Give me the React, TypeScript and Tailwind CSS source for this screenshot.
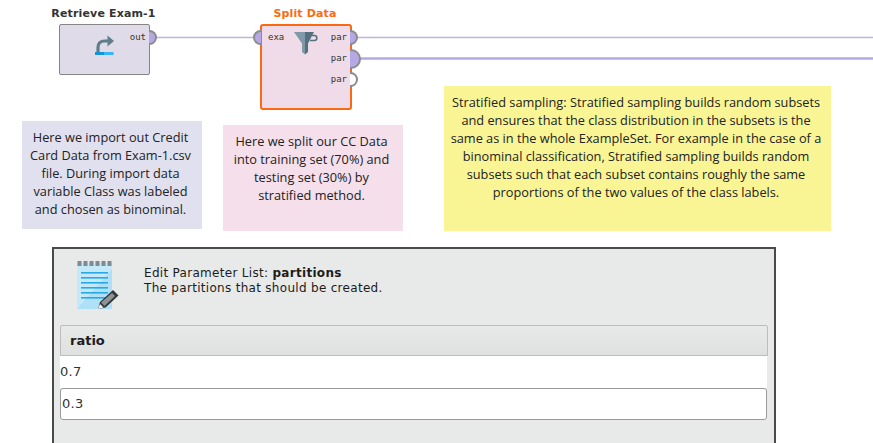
import type { ReactNode } from 'react'

const UI_FONT = "font-['DejaVu_Sans',sans-serif]"
const NOTE_FONT = "font-['Open_Sans',sans-serif]"
const PORT_FONT = "font-['DejaVu_Sans_Mono',monospace]"

// half-round port hanging off the side of an operator box
function Port({ side, className }: { side: 'in' | 'out'; className: string }): JSX.Element {
  const shape = side === 'in' ? 'rounded-l-full border-r-0' : 'rounded-r-full border-l-0'
  return <div className={`absolute border-2 border-[#8c8c8c] ${shape} ${className}`} />
}

function PortLabels({ names, className }: { names: string[]; className: string }): JSX.Element {
  return (
    <div className={`flex flex-col gap-[11px] text-[9px] leading-[10px] text-[#333] ${PORT_FONT} ${className}`}>
      {names.map((n, i) => (
        <span key={i}>{n}</span>
      ))}
    </div>
  )
}

// title above a box; the node itself sits freely on the process canvas
function Operator({
  title,
  position,
  titleColor,
  children
}: {
  title: string
  position: string
  titleColor: string
  children: ReactNode
}): JSX.Element {
  return (
    <div className={`absolute flex flex-col items-center ${position}`}>
      <div className={`mb-[3px] -translate-x-px whitespace-nowrap text-[11px] font-bold leading-[14px] tracking-[0.15px] ${titleColor}`}>
        {title}
      </div>
      {children}
    </div>
  )
}

function RetrieveIcon(): JSX.Element {
  return (
    <svg width="20" height="21" viewBox="0 0 20 21" className="ml-[35px] mt-[10px] shrink-0">
      <path d="M3 17.5V12.5C3 8.5 5.5 6 9.5 6H13.5" fill="none" stroke="#5f7d8c" strokeWidth="3.2" />
      <path d="M12.5 0.5L19 6L12.5 11.5Z" fill="#5f7d8c" />
      <rect x="0" y="17" width="9" height="3" fill="#1593d8" />
      <rect x="9" y="17" width="9.5" height="3" fill="#36b6f2" />
    </svg>
  )
}

function FilterIcon(): JSX.Element {
  return (
    <svg width="24" height="23" viewBox="0 0 24 23" className="ml-[10px] mt-[6px] shrink-0">
      <path d="M0 0H11V22.5L8 20V11.5Z" fill="#7f99a8" />
      <path d="M11 0H20L14 11.5V20L11 22.5Z" fill="#54707e" />
      <path d="M18 3.5H20.5C23.6 3.5 23.6 8.5 20.5 8.5H16" fill="none" stroke="#54707e" strokeWidth="1.5" />
    </svg>
  )
}

function NotepadIcon(): JSX.Element {
  return (
    <svg width="42" height="49" viewBox="0 0 42 49">
      <path d="M0 2H35V48H0Z" fill="#c4e9fa" />
      <path d="M0 48L35 8V48Z" fill="#aee1f8" />
      {[0.5, 6.5, 12.5, 18.5, 24.5, 30.5].map((x) => (
        <rect key={x} x={x} y="0" width="4" height="5" fill="#7f8a92" />
      ))}
      {[11, 16, 21, 26, 31, 36].map((y) => (
        <rect key={y} x="4" y={y} width="27" height="1.6" fill="#28a9e6" />
      ))}
      <path d="M21 48L23 41L36 29L41.5 34.5L28.5 46.5Z" fill="#33373a" />
      <path d="M24 41.5L35 32L38 35L27.5 45Z" fill="#8d9396" />
      <path d="M21 48L23 43L26.5 46.5Z" fill="#f2f2f2" />
    </svg>
  )
}

function Note({ className, children }: { className: string; children: ReactNode }): JSX.Element {
  return (
    <div className={`absolute whitespace-pre-line pr-[3px] pt-[7px] text-center text-[12.75px] leading-[18px] text-[#222] ${NOTE_FONT} ${className}`}>
      {children}
    </div>
  )
}

export default function App(): JSX.Element {
  return (
    <div className={`relative h-[443px] w-[873px] overflow-hidden bg-white ${UI_FONT}`}>
      {/* wires */}
      <svg width="873" height="443" className="absolute left-0 top-0">
        <line x1="156" y1="37.5" x2="254" y2="37.5" stroke="#bdb4e0" strokeWidth="1.5" />
        <line x1="357" y1="37.5" x2="873" y2="37.5" stroke="#bdb4e0" strokeWidth="1.5" />
        <line x1="360" y1="58.5" x2="873" y2="58.5" stroke="#b4a9e2" strokeWidth="2.5" />
      </svg>

      <Operator title="Retrieve Exam-1" position="left-[59px] top-[7px] w-[91px]" titleColor="text-[#333]">
        <div className="relative flex h-[51px] w-[91px] rounded-[2px] border border-[#858585] bg-[#dfdbe9]">
          <RetrieveIcon />
          <PortLabels names={['out']} className="ml-auto pr-[3px] pt-[7px]" />
          <Port side="out" className="-right-[8px] top-[5px] h-[15px] w-[8px] bg-[#b5a8e4]" />
        </div>
      </Operator>

      <Operator title="Split Data" position="left-[260px] top-[7px] w-[92px]" titleColor="text-[#fb6a10]">
        <div className="relative flex h-[86px] w-[92px] rounded-[3px] border-2 border-[#fb6a10] bg-[#f0dbe8]">
          <PortLabels names={['exa']} className="pl-[6px] pt-[6px]" />
          <FilterIcon />
          <PortLabels names={['par', 'par', 'par']} className="ml-auto pr-[3px] pt-[6px]" />
          <Port side="in" className="-left-[9px] top-[4px] h-[15px] w-[8px] bg-[#b5a8e4]" />
          <Port side="out" className="-right-[8px] top-[4px] h-[15px] w-[8px] bg-[#b5a8e4]" />
          <Port side="out" className="-right-[11px] top-[23px] h-[20px] w-[11px] bg-[#b5a8e4]" />
          <Port side="out" className="-right-[8px] top-[46px] h-[15px] w-[8px] bg-white" />
        </div>
      </Operator>

      <Note className="left-[22px] top-[121px] h-[108px] w-[180px] bg-[#e1e0ee]">
        {'Here we import out Credit\nCard Data from Exam-1.csv\nfile. During import data\nvariable Class was labeled\nand chosen as binominal.'}
      </Note>
      <Note className="left-[223px] top-[125px] h-[106px] w-[180px] bg-[#f4dfeb]">
        {'Here we split our CC Data\ninto training set (70%) and\ntesting set (30%) by\nstratified method.'}
      </Note>
      <Note className="left-[444px] top-[86px] h-[145px] w-[387px] bg-[#f9f595]">
        {'Stratified sampling: Stratified sampling builds random subsets\nand ensures that the class distribution in the subsets is the\nsame as in the whole ExampleSet. For example in the case of a\nbinominal classification, Stratified sampling builds random\nsubsets such that each subset contains roughly the same\nproportions of the two values of the class labels.'}
      </Note>

      {/* parameter list dialog */}
      <div className="absolute left-[52px] top-[247px] flex h-[210px] w-[724px] flex-col border-2 border-[#4a4a4a] bg-[#e8e9e9] px-[6px]">
        <div className="flex h-[76px] items-start">
          <div className="ml-[17px] mt-[12px]">
            <NotepadIcon />
          </div>
          <div className="ml-[25px] mt-[17px] text-[12px] leading-[15px] tracking-[0.3px] text-[#1c1c1c]">
            <div>
              Edit Parameter List: <span className="font-bold">partitions</span>
            </div>
            <div>The partitions that should be created.</div>
          </div>
        </div>
        <div className="flex h-[31px] items-center rounded-t-[2px] border border-[#bcbcbc] bg-gradient-to-b from-[#e8e9e9] to-[#dfe0e0] pl-[9px] text-[13px] font-bold text-[#1c1c1c]">
          ratio
        </div>
        <div className="mr-px flex h-[32px] items-center bg-white text-[13px] tracking-[0.3px] text-[#333]">0.7</div>
        <div className="mr-px flex h-[32px] items-center rounded-[3px] border border-[#9a9a9a] bg-white pl-[1px] text-[13px] tracking-[0.3px] text-[#333]">
          0.3
        </div>
      </div>
    </div>
  )
}
